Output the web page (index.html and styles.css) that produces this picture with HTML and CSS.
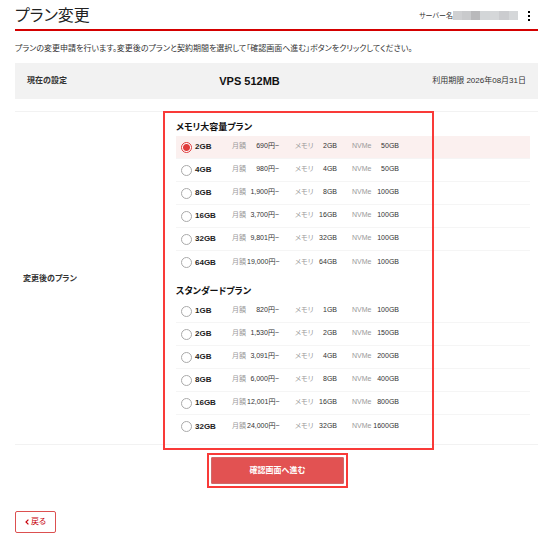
FILE: index.html
```html
<!DOCTYPE html>
<html lang="ja">
<head>
    <meta charset="UTF-8">
    <meta name="viewport" content="width=device-width, initial-scale=1.0">
    <title>プラン変更</title>
    <link rel="stylesheet" href="styles.css">
</head>
<body>
    <header class="page-header">
        <h1>プラン変更</h1>
        <div class="server">
            <span>サーバー名</span>
            <svg class="server-mask" viewBox="0 0 65 9" aria-hidden="true" shape-rendering="crispEdges">
                <rect width="65" height="9" fill="#d5d7d9"/>
                <rect width="9" height="9" fill="#cfd0d2"/>
                <rect x="9" width="9" height="9" fill="#c9cacc"/>
                <rect x="18" width="9" height="9" fill="#b9b9bb"/>
                <rect x="27" width="10" height="9" fill="#d3d6d8"/>
                <rect x="46" width="10" height="9" fill="#cbcccf"/>
            </svg>
            <button type="button" class="menu-btn" aria-label="メニュー">
                <svg viewBox="0 0 4 12" aria-hidden="true">
                    <rect x="1" y="1" width="2" height="2"/>
                    <rect x="1" y="5" width="2" height="2"/>
                    <rect x="1" y="9" width="2" height="2"/>
                </svg>
            </button>
        </div>
    </header>

    <main>
        <p class="intro">プランの変更申請を行います。変更後のプランと契約期間を選択して「確認画面へ進む」ボタンをクリックしてください。</p>

        <div class="current">
            <span class="current-label">現在の設定</span>
            <strong class="current-plan">VPS 512MB</strong>
            <span class="current-limit">利用期限 2026年08月31日</span>
        </div>

        <form>
            <div class="plan-section">
                <div class="plan-title">変更後のプラン</div>
                <div class="plan-groups">
                    <fieldset class="plan-group">
                        <legend>メモリ大容量プラン</legend>
                        <label class="plan"><input type="radio" name="plan" checked><b>2GB</b><i>月額</i><span>690円~</span><i>メモリ</i><span>2GB</span><i>NVMe</i><span>50GB</span></label>
                        <label class="plan"><input type="radio" name="plan"><b>4GB</b><i>月額</i><span>980円~</span><i>メモリ</i><span>4GB</span><i>NVMe</i><span>50GB</span></label>
                        <label class="plan"><input type="radio" name="plan"><b>8GB</b><i>月額</i><span>1,900円~</span><i>メモリ</i><span>8GB</span><i>NVMe</i><span>100GB</span></label>
                        <label class="plan"><input type="radio" name="plan"><b>16GB</b><i>月額</i><span>3,700円~</span><i>メモリ</i><span>16GB</span><i>NVMe</i><span>100GB</span></label>
                        <label class="plan"><input type="radio" name="plan"><b>32GB</b><i>月額</i><span>9,801円~</span><i>メモリ</i><span>32GB</span><i>NVMe</i><span>100GB</span></label>
                        <label class="plan"><input type="radio" name="plan"><b>64GB</b><i>月額</i><span>19,000円~</span><i>メモリ</i><span>64GB</span><i>NVMe</i><span>100GB</span></label>
                    </fieldset>
                    <fieldset class="plan-group">
                        <legend>スタンダードプラン</legend>
                        <label class="plan"><input type="radio" name="plan"><b>1GB</b><i>月額</i><span>820円~</span><i>メモリ</i><span>1GB</span><i>NVMe</i><span>100GB</span></label>
                        <label class="plan"><input type="radio" name="plan"><b>2GB</b><i>月額</i><span>1,530円~</span><i>メモリ</i><span>2GB</span><i>NVMe</i><span>150GB</span></label>
                        <label class="plan"><input type="radio" name="plan"><b>4GB</b><i>月額</i><span>3,091円~</span><i>メモリ</i><span>4GB</span><i>NVMe</i><span>200GB</span></label>
                        <label class="plan"><input type="radio" name="plan"><b>8GB</b><i>月額</i><span>6,000円~</span><i>メモリ</i><span>8GB</span><i>NVMe</i><span>400GB</span></label>
                        <label class="plan"><input type="radio" name="plan"><b>16GB</b><i>月額</i><span>12,001円~</span><i>メモリ</i><span>16GB</span><i>NVMe</i><span>800GB</span></label>
                        <label class="plan"><input type="radio" name="plan"><b>32GB</b><i>月額</i><span>24,000円~</span><i>メモリ</i><span>32GB</span><i>NVMe</i><span>1600GB</span></label>
                    </fieldset>
                </div>
                <div class="highlight"></div>
            </div>

            <div class="submit-row">
                <div class="submit-frame">
                    <button type="submit" class="btn-submit">確認画面へ進む</button>
                </div>
            </div>
        </form>

        <a href="#" class="btn-back">
            <svg viewBox="0 0 4 6" aria-hidden="true"><path d="M3.4 0.6 L1 3 L3.4 5.4"/></svg>
            戻る
        </a>
    </main>
</body>
</html>
```
FILE: styles.css
```css
* {
    box-sizing: border-box;
}

body {
    font-family: "Liberation Sans", "Noto Sans CJK JP", sans-serif;
    font-size: 8px;
    line-height: 12px;
    font-feature-settings: "palt";
    margin: 0;
    padding: 0 12px 24px 15px;
    background-color: #fff;
    color: #333;
}

.page-header {
    display: flex;
    justify-content: space-between;
    align-items: center;
    height: 31px;
    padding-top: 2px;
    border-bottom: 2px solid #d40000;
}

.page-header h1 {
    margin: 0;
    font-size: 16px;
    font-weight: normal;
    line-height: 24px;
    color: #222;
}

.server {
    display: flex;
    align-items: center;
    padding-right: 7px;
    font-size: 7px;
}

.server-mask {
    width: 65px;
    height: 9px;
}

.menu-btn {
    display: flex;
    margin-left: 9px;
    padding: 0;
    border: none;
    background: none;
    cursor: pointer;
}

.menu-btn svg {
    width: 4px;
    height: 12px;
}

.intro {
    margin: 12px 0 8px;
}

.current {
    display: flex;
    justify-content: space-between;
    align-items: center;
    height: 36px;
    padding: 0 12px;
    background-color: #f2f2f2;
}

.current-label {
    font-weight: bold;
}

.current-plan {
    font-size: 11px;
    color: #111;
}

.plan-section {
    position: relative;
    display: flex;
    align-items: center;
    margin-top: 12px;
    padding: 8px 8px 6px;
    border-top: 1px solid #f2f2f2;
    border-bottom: 1px solid #f2f2f2;
}

.plan-title {
    width: 153px;
    font-weight: bold;
}

.plan-groups {
    flex: 1;
}

.plan-group {
    margin: 0;
    padding: 0;
    border: none;
}

.plan-group + .plan-group {
    margin-top: 10px;
}

.plan-group legend {
    padding: 0 0 2px;
    font-size: 9px;
    font-weight: bold;
    line-height: 14px;
    color: #111;
}

.plan {
    display: grid;
    grid-template-columns: 14px 37px 15px 32px 16px 20px 22px 15px 20px 27px;
    align-items: center;
    height: 23px;
    padding-left: 5px;
    border-bottom: 1px solid #f5f5f5;
    font-size: 7px;
    cursor: pointer;
}

.plan:last-child {
    border-bottom: none;
}

.plan:has(input:checked) {
    background-color: #fbf0ef;
}

.plan b {
    font-size: 8px;
    color: #222;
}

.plan i {
    font-style: normal;
    color: #999;
}

.plan i:nth-of-type(2) {
    grid-column: 6;
}

.plan i:nth-of-type(3) {
    grid-column: 9;
}

.plan span {
    text-align: right;
}

.plan i,
.plan span {
    padding-bottom: 2px;
    white-space: nowrap;
}

.plan input {
    appearance: none;
    width: 11px;
    height: 11px;
    margin: 0;
    border: 1px solid #aaa;
    border-radius: 50%;
    background-color: #fff;
}

.plan input:checked {
    border-color: #e03c3c;
    background: radial-gradient(circle, #e03c3c 3px, #fff 4px);
}

/* frames over the parts the user has to operate */
.highlight {
    position: absolute;
    top: -1px;
    bottom: -6px;
    left: 148px;
    width: 271px;
    border: 2px solid #f93a38;
    pointer-events: none;
}

.submit-row {
    display: flex;
    justify-content: center;
    margin-top: 8px;
    padding-left: 2px;
}

.submit-frame {
    padding: 2px;
    border: 2px solid #f93a38;
}

.btn-submit {
    display: block;
    width: 133px;
    height: 27px;
    padding: 0;
    border: 1px solid #cf6a6a;
    border-radius: 1px;
    background-color: #e25252;
    color: #fff;
    font: inherit;
    font-weight: bold;
    font-feature-settings: inherit;
    cursor: pointer;
}

.btn-back {
    display: inline-flex;
    align-items: center;
    gap: 2px;
    margin-top: 23px;
    padding: 4px 9px;
    border: 1px solid #dc5050;
    border-radius: 2px;
    color: #c8000a;
    text-decoration: none;
}

.btn-back svg {
    width: 4px;
    height: 6px;
    fill: none;
    stroke: #c8000a;
    stroke-width: 1.2;
}
```
